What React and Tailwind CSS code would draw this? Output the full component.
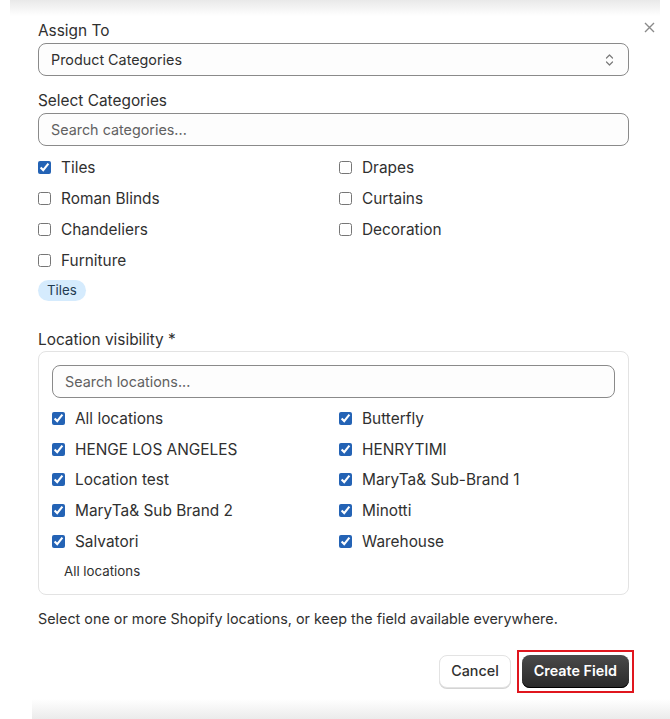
import { useState } from 'react';

const categories = [
  { label: 'Tiles', checked: true },
  { label: 'Drapes', checked: false },
  { label: 'Roman Blinds', checked: false },
  { label: 'Curtains', checked: false },
  { label: 'Chandeliers', checked: false },
  { label: 'Decoration', checked: false },
  { label: 'Furniture', checked: false },
];

const locations = [
  'All locations',
  'Butterfly',
  'HENGE LOS ANGELES',
  'HENRYTIMI',
  'Location test',
  'MaryTa& Sub-Brand 1',
  'MaryTa& Sub Brand 2',
  'Minotti',
  'Salvatori',
  'Warehouse',
];

function Check({ label, checked, tight }) {
  return (
    <label
      className={`flex items-center gap-[10px] text-[15.4px] text-[#303030] ${tight ? 'h-[30.75px]' : 'h-[31px]'}`}
    >
      <input
        type="checkbox"
        defaultChecked={checked}
        className="m-0 h-[13px] w-[13px] accent-[#2463b5]"
      />
      <span>{label}</span>
    </label>
  );
}

export default function App() {
  const [cat, setCat] = useState('');
  const [loc, setLoc] = useState('');

  return (
    <div
      className="relative h-[719px] w-[670px] overflow-hidden bg-white text-[#303030]"
      style={{ fontFamily: 'Inter, "Noto Sans", sans-serif' }}
    >
      {/* edge shadows of the modal */}
      <div className="absolute left-[10px] right-[10px] top-0 h-4 bg-gradient-to-b from-[#e9e9e9] to-white" />
      <div className="absolute bottom-0 left-[32px] right-0 h-5 bg-gradient-to-t from-[#ebebeb] to-white" />

      <button className="absolute right-[15px] top-[22px] text-[#8a8a8a]">
        <svg width="11" height="11" viewBox="0 0 11 11" fill="none" stroke="currentColor" strokeWidth="1.4">
          <path d="M1 1l9 9M10 1l-9 9" />
        </svg>
      </button>

      <div className="relative pl-[38px] pr-[41px] pt-[21px]">
        <div className="text-[15.4px] leading-5">Assign To</div>
        <div className="mt-[2px] flex h-[33px] items-center justify-between rounded-lg border border-[#8a8a8a] bg-[#fdfdfd] pl-3 pr-[14px] text-[14.35px]">
          <span>Product Categories</span>
          <svg width="9" height="14" viewBox="0 0 9 14" fill="none" stroke="#7a7a7a" strokeWidth="1.2" strokeLinecap="round" strokeLinejoin="round">
            <path d="M1.5 5l3-3 3 3M1.5 9l3 3 3-3" />
          </svg>
        </div>

        <div className="mt-[15px] text-[15.4px] leading-5">Select Categories</div>
        <input
          value={cat}
          onChange={(e) => setCat(e.target.value)}
          placeholder="Search categories..."
          className="mt-[2px] h-[33px] w-full rounded-lg border border-[#8a8a8a] bg-[#fdfdfd] px-3 text-[14.35px] outline-none placeholder-[#616161]"
        />

        <div className="mt-[6px] grid grid-cols-2 gap-x-[11px]">
          {categories.map((c) => (
            <Check key={c.label} label={c.label} checked={c.checked} />
          ))}
        </div>

        <div className="mt-[4px] flex">
          <span className="rounded-full bg-[#d5ebfd] px-[9px] py-[2px] text-[13.3px] leading-[17px] text-[#1f3a52]">Tiles</span>
        </div>

        <div className="mt-[29px] text-[15.4px] leading-5">Location visibility *</div>
        <div className="mt-[1px] rounded-lg border border-[#e3e3e3] px-[13px] pb-[14px] pt-[13px]">
          <input
            value={loc}
            onChange={(e) => setLoc(e.target.value)}
            placeholder="Search locations..."
            className="h-[33px] w-full rounded-lg border border-[#8a8a8a] bg-[#fdfdfd] px-3 text-[14.35px] outline-none placeholder-[#616161]"
          />
          <div className="mt-[5px] grid grid-cols-2 gap-x-[11px]">
            {locations.map((l) => (
              <Check key={l} label={l} checked tight />
            ))}
          </div>
          <div className="mt-[5px] pl-3 text-[13.3px] leading-[18px]">All locations</div>
        </div>

        <p className="mt-[14px] text-[14.35px] leading-5">
          Select one or more Shopify locations, or keep the field available everywhere.
        </p>

        <div className="mt-[21px] flex items-center justify-end gap-[6px]">
          <button className="h-[33px] rounded-lg border border-[#e3e3e3] bg-white px-[11px] text-[14.35px] font-medium text-[#303030] shadow-[0_1px_0_#d4d4d4]">
            Cancel
          </button>
          <div className="-mr-[5px] border-2 border-[#e0161e] p-[3px]">
            <button className="h-[33px] rounded-lg bg-gradient-to-b from-[#4a4a4a] to-[#2a2a2a] px-3 text-[14.35px] font-semibold text-white shadow-[inset_0_-1px_0_#000]">
              Create Field
            </button>
          </div>
        </div>
      </div>
    </div>
  );
}
